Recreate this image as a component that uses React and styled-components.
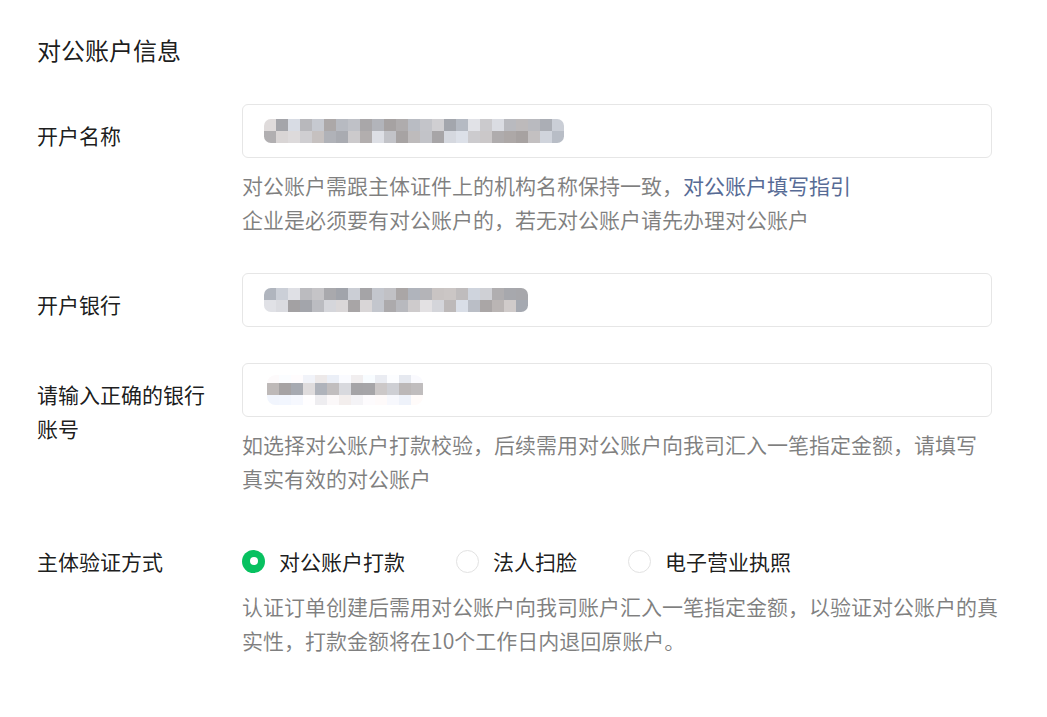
import React from "react";
import styled, { createGlobalStyle } from "styled-components";

const GlobalStyle = createGlobalStyle`
  html, body { margin: 0; padding: 0; background: #ffffff; }
  body {
    font-family: "Noto Sans CJK SC", "Noto Sans", sans-serif;
    color: rgba(0, 0, 0, 0.9);
  }
`;

const Page = styled.div`
  padding: 32px 37px 40px 37px;
  width: 1047px;
  box-sizing: border-box;
`;

const Title = styled.h2`
  margin: 0 0 36px 0;
  font-size: 24px;
  line-height: 36px;
  font-weight: 400;
  color: rgba(0, 0, 0, 0.9);
`;

const Row = styled.div`
  display: grid;
  grid-template-columns: 205px 750px;
  margin-top: ${(p) => p.$top || 0}px;
`;

const Label = styled.div`
  width: 180px;
  padding-top: ${(p) => (p.$inline ? 0 : 14)}px;
  font-size: 21px;
  line-height: 34px;
  color: rgba(0, 0, 0, 0.9);
`;

const Field = styled.div`
  display: flex;
  flex-direction: column;
`;

const InputBox = styled.div`
  box-sizing: border-box;
  height: 54px;
  border: 1px solid #e6e6e6;
  border-radius: 6px;
  padding-left: ${(p) => p.$pad || 21}px;
  display: flex;
  align-items: center;
  background: #fff;
`;

const Help = styled.div`
  margin-top: ${(p) => p.$top || 10}px;
  font-size: 21px;
  line-height: 34px;
  color: rgba(0, 0, 0, 0.5);
  white-space: nowrap;
`;

const Link = styled.a`
  color: #576b95;
  text-decoration: none;
  cursor: pointer;
`;

const RadioGroup = styled.div`
  display: flex;
  align-items: center;
  height: 34px;
`;

const RadioItem = styled.label`
  display: flex;
  align-items: center;
  margin-right: 51px;
  font-size: 21px;
  line-height: 34px;
  color: rgba(0, 0, 0, 0.9);
  cursor: pointer;
`;

const RadioCircle = styled.span`
  box-sizing: border-box;
  width: 23px;
  height: 23px;
  border-radius: 50%;
  margin-right: 14px;
  display: flex;
  align-items: center;
  justify-content: center;
  background: ${(p) => (p.$checked ? "#07c160" : "#fff")};
  border: ${(p) => (p.$checked ? "none" : "1px solid #e2e2e2")};
  &::after {
    content: "";
    display: ${(p) => (p.$checked ? "block" : "none")};
    width: 8px;
    height: 8px;
    border-radius: 50%;
    background: #fff;
  }
`;

function makeRand(seed) {
  let s = seed;
  return () => {
    s = (s * 9301 + 49297) % 233280;
    return s / 233280;
  };
}

function Mosaic({ seed, cols, rows, block = 12, light = [] }) {
  const rand = makeRand(seed);
  const width = cols * block;
  const height = rows.reduce((a, r) => a + r, 0);
  const rects = [];
  let y = 0;
  rows.forEach((rh, ri) => {
    for (let c = 0; c < cols; c++) {
      const isLight = light.includes(ri);
      const base = isLight ? 232 : 160;
      const span = isLight ? 22 : 66;
      const g = Math.round(base + rand() * span);
      const tint = Math.round((rand() - 0.5) * 10);
      const r = Math.min(255, g + tint);
      const b = Math.min(255, g - tint + 4);
      rects.push(
        <rect
          key={ri + "-" + c}
          x={c * block}
          y={y}
          width={block}
          height={rh}
          fill={`rgb(${r},${g},${b})`}
        />
      );
    }
    y += rh;
  });
  return (
    <svg width={width} height={height} viewBox={`0 0 ${width} ${height}`}>
      <defs>
        <clipPath id={"clip" + seed}>
          <rect x="0" y="0" width={width} height={height} rx={height / 3.5} />
        </clipPath>
      </defs>
      <g clipPath={`url(#clip${seed})`}>{rects}</g>
    </svg>
  );
}

export default function App() {
  return (
    <>
      <GlobalStyle />
      <Page>
        <Title>对公账户信息</Title>

        <Row>
          <Label>开户名称</Label>
          <Field>
            <InputBox $pad={21}>
              <Mosaic seed={17} cols={25} rows={[12, 12]} />
            </InputBox>
            <Help>
              对公账户需跟主体证件上的机构名称保持一致，<Link>对公账户填写指引</Link>
              <br />
              企业是必须要有对公账户的，若无对公账户请先办理对公账户
            </Help>
          </Field>
        </Row>

        <Row $top={37}>
          <Label>开户银行</Label>
          <Field>
            <InputBox $pad={21}>
              <Mosaic seed={53} cols={22} rows={[12, 12]} />
            </InputBox>
          </Field>
        </Row>

        <Row $top={36}>
          <Label>请输入正确的银行账号</Label>
          <Field>
            <InputBox $pad={24}>
              <Mosaic seed={91} cols={13} rows={[8, 12, 10]} light={[0, 2]} />
            </InputBox>
            <Help>
              如选择对公账户打款校验，后续需用对公账户向我司汇入一笔指定金额，请填写
              <br />
              真实有效的对公账户
            </Help>
          </Field>
        </Row>

        <Row $top={49}>
          <Label $inline>主体验证方式</Label>
          <Field>
            <RadioGroup>
              <RadioItem>
                <RadioCircle $checked />
                对公账户打款
              </RadioItem>
              <RadioItem>
                <RadioCircle />
                法人扫脸
              </RadioItem>
              <RadioItem>
                <RadioCircle />
                电子营业执照
              </RadioItem>
            </RadioGroup>
            <Help $top={11}>
              认证订单创建后需用对公账户向我司账户汇入一笔指定金额，以验证对公账户的真
              <br />
              实性，打款金额将在10个工作日内退回原账户。
            </Help>
          </Field>
        </Row>
      </Page>
    </>
  );
}
